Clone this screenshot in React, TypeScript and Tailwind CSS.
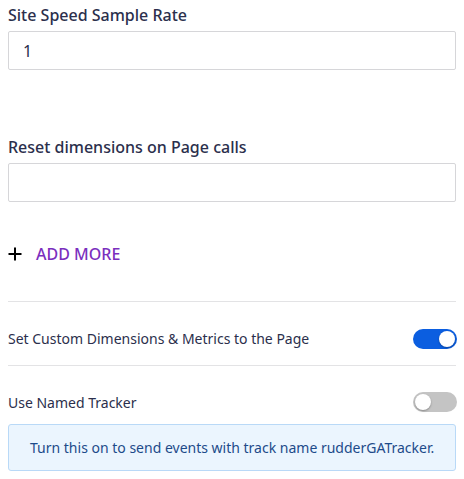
import React from "react";

function Toggle({ on }: { on: boolean }) {
  return (
    <div
      className={
        "relative w-[44px] h-[20px] rounded-full shrink-0 mr-[-1px] " +
        (on ? "bg-[#0b5ee0]" : "bg-[#c4c4c4]")
      }
    >
      <div
        className={
          "absolute top-[2px] w-[16px] h-[16px] rounded-full bg-white shadow-[0_1px_2px_rgba(0,0,0,0.3)] " +
          (on ? "right-[2px]" : "left-[2px]")
        }
      />
    </div>
  );
}

export default function App() {
  return (
    <div
      className="w-[464px] h-[479px] bg-white pl-[8px] pr-[8px] text-[#2b2f4c]"
      style={{ fontFamily: '"Noto Sans", "Open Sans", sans-serif' }}
    >
      <div className="w-[448px]">
        <div className="pt-[3px] text-[16px] leading-[24px] font-medium">Site Speed Sample Rate</div>
        <div className="mt-[4px] h-[39px] border border-[#d6d6d9] rounded-[2px] flex items-center px-[14px] text-[16px] text-[#2b2f4c]">
          1
        </div>

        <div className="mt-[65px] text-[16px] leading-[24px] font-medium">Reset dimensions on Page calls</div>
        <div className="mt-[4px] h-[39px] border border-[#d6d6d9] rounded-[2px]" />

        <div className="mt-[40px] flex items-center h-[24px]">
          <svg width="14" height="14" viewBox="0 0 14 14" className="mr-[14px]">
            <path d="M7 0.5V13.5M0.5 7H13.5" stroke="#000" strokeWidth="2" />
          </svg>
          <span className="text-[16px] font-medium text-[#7b2fbe]">ADD MORE</span>
        </div>

        <div className="mt-[35px] border-t border-[#e3e3e5]" />

        <div className="h-[63px] pt-[10px] flex items-center justify-between">
          <span className="text-[14px]">Set Custom Dimensions &amp; Metrics to the Page</span>
          <Toggle on={true} />
        </div>

        <div className="border-t border-[#e3e3e5]" />

        <div className="mt-[24px] mb-[10px] h-[24px] flex items-center justify-between">
          <span className="text-[14px]">Use Named Tracker</span>
          <Toggle on={false} />
        </div>

        <div className="h-[47px] rounded-[3px] border border-[#b9d9f7] bg-[#ebf5fe] flex items-center pl-[21px] text-[14px] text-[#1d4b8a]">
          Turn this on to send events with track name rudderGATracker.
        </div>
      </div>
    </div>
  );
}
